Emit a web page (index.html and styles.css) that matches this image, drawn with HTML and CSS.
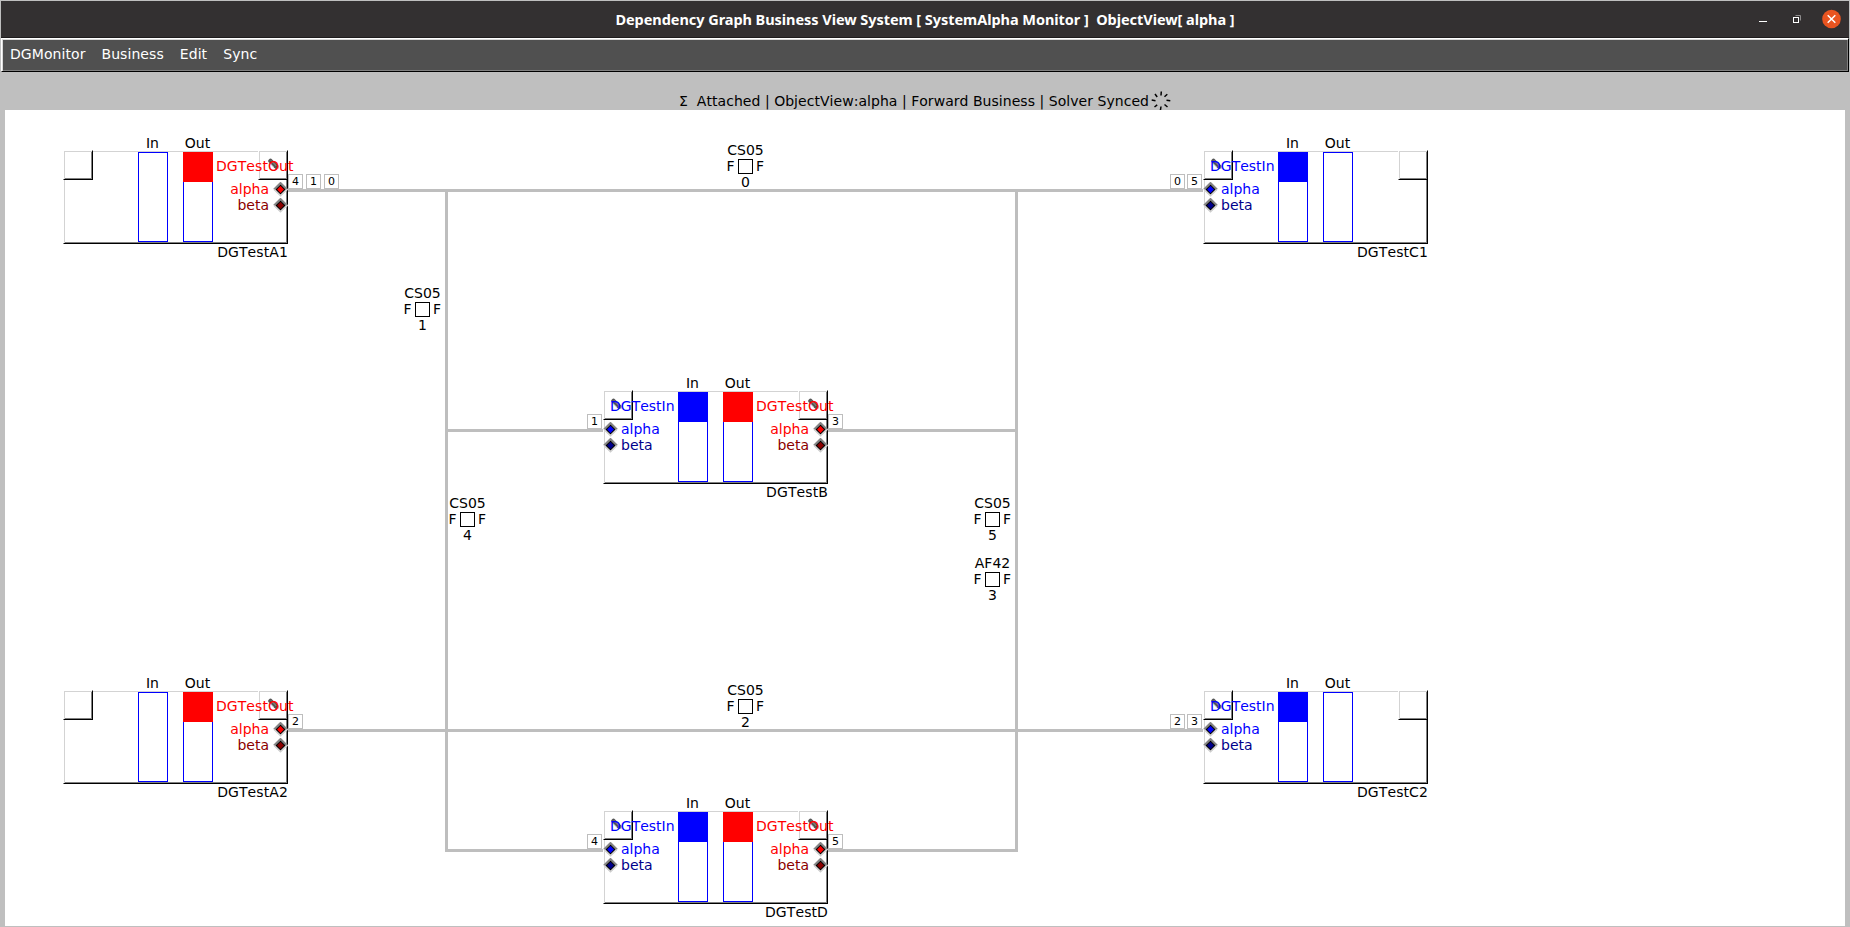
FILE: index.html
```
<!DOCTYPE html>
<html lang="en">
<head>
<meta charset="utf-8">
<title>Dependency Graph Business View System</title>
<link rel="stylesheet" href="styles.css">
</head>
<body>
<div class="window">
  <header class="titlebar">
    <h1 class="title">Dependency Graph Business View System [ SystemAlpha Monitor ]&nbsp; ObjectView[ alpha ]</h1>
    <div class="controls">
      <svg width="8" height="20"><rect x="0" y="12" width="8" height="1" fill="#fff"/></svg>
      <svg width="8" height="20"><path d="M2.500 6.500h5v5" fill="none" stroke="#8e8c8d"/><rect x=".5" y="8.500" width="5" height="5" fill="none" stroke="#fff"/></svg>
      <svg width="19" height="20"><circle cx="9.500" cy="10" r="9.300" fill="#e95420"/><path d="M5.700 6.200l7.600 7.600m0-7.600l-7.600 7.600" stroke="#fff" stroke-width="1.500"/></svg>
    </div>
  </header>
  <nav class="menubar"><span>DGMonitor</span><span>Business</span><span>Edit</span><span>Sync</span></nav>
  <div class="status">
    <span>Σ&nbsp; Attached | ObjectView:alpha | Forward Business | Solver Synced</span>
    <svg class="spinner" width="20" height="20" viewBox="-10 -10 20 20"><path d="M.3-9.500L0-5.500M6.300-6.800L3.500-4.200M9.300-.3L5.500-.8M6.500 6L3.500 3.500M-.6 9.300L0 5.500M-6.500 6L-3.800 3.800M-9.300-1L-5.500-.3M-6-7L-3.800-4"/></svg>
  </div>
  <main class="canvas">
    <svg class="wires" width="1840" height="817" viewBox="5 110 1840 817"><path d="M288 190.500H1203M288 730.500H1203M446.500 189V852M1016.500 189V852M446.500 430.500H603M828 430.500H1016.500M446.500 850.500H603M828 850.500H1016.500"/></svg>
  </main>
</div>
<script src="diagram.js"></script>
</body>
</html>
```

FILE: diagram.js
```
const canvas = document.querySelector('.canvas');
const ORIGIN_X = 5;
const ORIGIN_Y = 110;

const nodes = [
  { name: 'DGTestA1', x: 63, y: 150, out: true, right: [4, 1, 0] },
  { name: 'DGTestC1', x: 1203, y: 150, in: true, left: [0, 5] },
  { name: 'DGTestB', x: 603, y: 390, in: true, out: true, left: [1], right: [3] },
  { name: 'DGTestA2', x: 63, y: 690, out: true, right: [2] },
  { name: 'DGTestC2', x: 1203, y: 690, in: true, left: [2, 3] },
  { name: 'DGTestD', x: 603, y: 810, in: true, out: true, left: [4], right: [5] },
];

const markers = [
  ['CS05', 0, 738, 159], ['CS05', 1, 415, 302], ['CS05', 4, 460, 512],
  ['CS05', 5, 985, 512], ['AF42', 3, 985, 572], ['CS05', 2, 738, 699],
];

const pencil = '<svg class="pencil" width="12" height="12" viewBox="0 0 12 12"><path d="M2.500 3L8 8.500" stroke="#555" stroke-width="4.500" stroke-linecap="round"/><path d="M3 2.500L8.500 8M1.500 4.500L6 9" stroke="#aaa" stroke-width=".8"/><path d="M7 10.500L10.500 7V10.500z" fill="#777"/></svg>';

const diamond = (kind) => `<svg class="diamond" width="15" height="15" viewBox="0 0 15 15"><path d="M7.500 0L15 7.500L7.500 15L0 7.500z" fill="#fff"/><path d="M1 7.500L7.500 1L14 7.500" fill="none" stroke="#858585" stroke-width="2"/><path d="M1 7.500L7.500 14L14 7.500" fill="none" stroke="#ccc" stroke-width="1.200"/><path class="${kind}" d="M7.500 3.200L11.800 7.500L7.500 11.800L3.200 7.500z" stroke="#000" stroke-width="1.100"/></svg>`;

const port = (side) => {
  const label = side === 'in' ? 'DGTestIn' : 'DGTestOut';
  return `${pencil}<div class="port-name">${label}</div>
    <div class="channel alpha"><span>alpha</span>${diamond(side + '-alpha')}</div>
    <div class="channel beta"><span>beta</span>${diamond(side + '-beta')}</div>`;
};

const badges = (side, list) =>
  list ? `<div class="badges ${side}">${list.map((n) => `<span>${n}</span>`).join('')}</div>` : '';

const add = (className, x, y, html) => {
  const el = document.createElement('div');
  el.className = className;
  el.style.left = `${x - ORIGIN_X}px`;
  el.style.top = `${y - ORIGIN_Y}px`;
  el.innerHTML = html;
  canvas.append(el);
};

nodes.forEach((n) => add('node', n.x, n.y, `
  <div class="frame raised"></div>
  <div class="corner corner-left raised"></div>
  <div class="corner corner-right raised"></div>
  <div class="bar bar-in ${n.in ? 'filled' : ''}"><b>In</b></div>
  <div class="bar bar-out ${n.out ? 'filled' : ''}"><b>Out</b></div>
  ${n.in ? `<div class="port in">${port('in')}</div>` : ''}
  ${n.out ? `<div class="port out">${port('out')}</div>` : ''}
  ${badges('before', n.left)}${badges('after', n.right)}
  <div class="node-name">${n.name}</div>`));

markers.forEach(([code, index, x, y]) => add('marker', x - 15, y - 17, `
  <div>${code}</div><div class="flags"><span>F</span><i></i><span>F</span></div><div>${index}</div>`));
```

FILE: styles.css
```
* { box-sizing: border-box; }
body {
  margin: 0;
  font: 14px/16px "DejaVu Sans", sans-serif;
  font-kerning: none;
  color: #000;
  white-space: nowrap;
}
.window {
  display: flex;
  flex-direction: column;
  width: 1850px;
  height: 927px;
  padding: 1px 1px 0;
  background: #bfbfbf;
  overflow: hidden;
}
.titlebar {
  display: flex;
  align-items: center;
  justify-content: center;
  position: relative;
  height: 37px;
  background: #333031;
  border-bottom: 1px solid #1e1c1d;
}
.title {
  margin: 0;
  color: #fff;
  font: 700 14.500px/20px "Noto Sans", sans-serif;
  letter-spacing: -0.050px;
}
.controls {
  position: absolute;
  right: 8px;
  top: 8px;
  display: flex;
}
.controls svg:nth-child(2) { margin: 0 21px 0 26px; }
.menubar {
  display: flex;
  gap: 16px;
  height: 34px;
  padding: 7px 8px;
  color: #fff;
  letter-spacing: 0.070px;
  background: #505050;
  border: 1px solid;
  border-color: #fff #000 #000 #fff;
  box-shadow: inset 1px 1px #d9d9d9, inset -1px -1px #808080;
}
.status {
  display: flex;
  justify-content: center;
  height: 38px;
  padding: 21px 0 0 0;
  letter-spacing: 0.040px;
}
.spinner { margin: -2px 0 0 2px; flex: none; }
.spinner path { stroke: #000; stroke-width: 1.500; }
.canvas {
  position: relative;
  height: 816px;
  margin: 0 4px;
  background: #fff;
}
.wires { display: block; height: 817px; }
.wires path { fill: none; stroke: #bebebe; stroke-width: 3; }
.node { position: absolute; width: 225px; height: 94px; }
.raised {
  position: absolute;
  border: 1px solid;
  border-color: #fff #000 #000 #fff;
  box-shadow: inset 1px 1px #d3d3d3, inset -1px -1px #808080;
}
.frame { inset: 0; background: #fff; }
.corner { top: 0; width: 30px; height: 30px; }
.corner-left { left: 0; }
.corner-right { right: 0; }
.bar {
  position: absolute;
  top: 2px;
  width: 30px;
  height: 90px;
  border: 1px solid #00f;
  background: #fff;
}
.bar-in { left: 75px; }
.bar-out { left: 120px; }
.bar b {
  position: absolute;
  top: -18px;
  left: -0.500px;
  width: 28px;
  text-align: center;
  font-weight: 400;
}
.bar.filled::before {
  content: "";
  position: absolute;
  left: -1px;
  top: -1px;
  width: 30px;
  height: 30px;
}
.bar-in.filled::before { background: #00f; }
.bar-out.filled::before { background: #f00; }
.port-name, .channel, .pencil { position: absolute; }
.port-name { top: 8px; }
.in .port-name { left: 7px; }
.out .port-name { left: 153px; letter-spacing: 0.060px; }
.in { color: #00f; }
.out { color: #f00; }
.pencil { top: 8px; }
.in .pencil { left: 8px; }
.out .pencil { left: 205px; }
.channel { display: flex; align-items: center; gap: 4px; height: 16px; }
.channel.alpha { top: 31px; }
.channel.beta { top: 47px; }
.in .channel { left: 0; flex-direction: row-reverse; justify-content: flex-end; gap: 3px; }
.out .channel { right: 0; }
.in .beta { color: #00008b; }
.out .beta { color: #8b0000; }
.in-alpha { fill: #00f; }
.in-beta { fill: #00008b; }
.out-alpha { fill: #f00; }
.out-beta { fill: #8b0000; }
.badges { position: absolute; top: 24px; display: flex; }
.badges.before { right: 226px; gap: 2px; }
.badges.after { left: 225px; gap: 3px; }
.badges span {
  width: 15px;
  height: 15px;
  border: 1px solid #bebebe;
  background: #fff;
  font-size: 11px;
  line-height: 13px;
  text-align: center;
}
.node-name { position: absolute; top: 94px; right: 0; letter-spacing: 0.100px; }
.marker { position: absolute; width: 45px; text-align: center; }
.flags {
  display: grid;
  grid-template-columns: 11px 15px 11px;
  column-gap: 3px;
  justify-content: center;
}
.flags i { width: 15px; height: 15px; margin-top: 1px; border: 1px solid #000; }
.flags span:first-child { padding-left: 2px; }
.flags span:last-child { text-align: left; }
```
